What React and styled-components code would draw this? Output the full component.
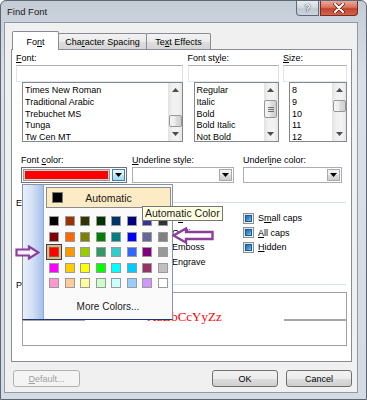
import React from 'react';
import styled, { createGlobalStyle, css } from 'styled-components';

const UI = `"Liberation Sans", Arial, sans-serif`;

const Global = createGlobalStyle`
  html, body { margin: 0; padding: 0; background: #fff; }
  body { font-family: ${UI}; }
  * { box-sizing: border-box; }
  u { text-decoration-thickness: 1px; text-underline-offset: 1px; }
`;

const Window = styled.div`
  position: relative;
  width: 367px;
  height: 400px;
  display: flex;
  flex-direction: column;
  background: linear-gradient(180deg, #c4ccd6 0%, #dce1e7 20%, #d5dbe2 100%);
  border: 1px solid #5c6675;
  border-radius: 6px 6px 0 0;
  overflow: hidden;
  font-family: ${UI};
  font-size: 9px;
  color: #000;
`;

const TitleBar = styled.div`
  height: 21px;
  flex: none;
  display: flex;
  align-items: flex-start;
`;

const Title = styled.div`
  font-size: 9.5px;
  line-height: 21px;
  padding-left: 6px;
  color: #1a1a1a;
`;

const CaptionButtons = styled.div`
  margin-left: auto;
  margin-right: 8px;
  display: flex;
  gap: 1px;
`;

const CapBtn = styled.div`
  height: 15px;
  display: flex;
  align-items: center;
  justify-content: center;
  border: 1px solid #5d6a7c;
  border-top: none;
  ${p => p.$close ? css`
    width: 38px;
    border-radius: 0 0 4px 0;
    border-color: #7a2a20;
    background: linear-gradient(180deg, #e9a99b 0%, #d9735f 45%, #c4432c 55%, #d2644c 100%);
  ` : css`
    width: 23px;
    border-radius: 0 0 0 4px;
    background: linear-gradient(180deg, #e8ecf1 0%, #d3d9e1 45%, #c1c9d3 55%, #cdd4dd 100%);
    color: #fff;
    font-weight: bold;
    font-size: 10px;
    text-shadow: 0 0 1px #2b3440, 0 0 1px #2b3440;
  `}
`;

const Client = styled.div`
  flex: 1;
  margin: 0 8px 6px 3px;
  border: 1px solid #8f9aa8;
  background: #f0f0f0;
  padding: 8px 5px 5px 6px;
  display: flex;
  flex-direction: column;
`;

const Tabs = styled.div`
  height: 19px;
  margin-bottom: -1px;
  display: flex;
  align-items: flex-start;
  padding-left: 1px;
  position: relative;
  z-index: 1;
`;

const Tab = styled.div`
  width: ${p => p.$w}px;
  display: flex;
  align-items: center;
  justify-content: center;
  border: 1px solid #898c95;
  border-bottom: none;
  border-radius: 2px 2px 0 0;
  & + & { margin-left: -1px; }
  ${p => p.$active ? css`
    height: 19px;
    padding-top: 1px;
    background: #fff;
    position: relative;
    z-index: 2;
  ` : css`
    height: 16px;
    margin-top: 2px;
    background: linear-gradient(180deg, #f3f3f3 0%, #ebebeb 50%, #dedede 51%, #d6d6d6 100%);
  `}
`;

const Panel = styled.div`
  height: 313px;
  flex: none;
  background: #fff;
  border: 1px solid #898c95;
  padding: 0 4px;
  display: flex;
  flex-direction: column;
`;

const FontGrid = styled.div`
  margin-top: 2px;
  display: grid;
  grid-template-columns: 167px 91px 64px;
  column-gap: 4.5px;
`;

const Label = styled.div`
  height: 13px;
  line-height: 13px;
  white-space: nowrap;
`;

const TextBox = styled.div`
  height: 17px;
  border: 1px solid #abadb3;
  border-color: #abadb3 #dbdfe6 #e3e9ef #e2e3ea;
  background: #fff;
`;

const ListBox = styled.div`
  height: 60px;
  margin-left: 6px;
  border: 1px solid #828790;
  background: #fff;
  display: flex;
`;

const Items = styled.div`
  flex: 1;
  padding: 1px 0 0 2px;
  overflow: hidden;
`;

const Item = styled.div`
  height: 11.8px;
  line-height: 12px;
  white-space: nowrap;
`;

const SBar = styled.div`
  width: 14px;
  display: flex;
  flex-direction: column;
  background: linear-gradient(90deg, #e2e2e2 0%, #f0f0f0 30%, #f3f3f3 70%, #e6e6e6 100%);
`;

const SArrow = styled.div`
  height: 14px;
  flex: none;
  display: flex;
  align-items: center;
  justify-content: center;
`;

const STrack = styled.div`
  flex: 1;
  display: flex;
  flex-direction: column;
  align-items: center;
`;

const SThumb = styled.div`
  width: 13px;
  margin-top: ${p => p.$top}px;
  height: ${p => p.$h}px;
  border: 1px solid #979797;
  border-radius: 2px;
  background: linear-gradient(90deg, #f4f4f4 0%, #ececec 45%, #dcdcdc 55%, #d0d0d0 100%);
  display: flex;
  align-items: center;
  justify-content: center;
`;

const Grip = styled.div`
  width: 6px;
  height: 5px;
  background: repeating-linear-gradient(180deg, #6e6e6e 0 1px, transparent 1px 2px);
`;

const ScrollBar = ({ top, h, grip }) => (
  <SBar>
    <SArrow>
      <svg width="7" height="4" viewBox="0 0 7 4"><path d="M0 4 L3.5 0 L7 4Z" fill="#4d4d4d" /></svg>
    </SArrow>
    <STrack>
      <SThumb $top={top} $h={h}>{grip && <Grip />}</SThumb>
    </STrack>
    <SArrow>
      <svg width="7" height="4" viewBox="0 0 7 4"><path d="M0 0 L3.5 4 L7 0Z" fill="#4d4d4d" /></svg>
    </SArrow>
  </SBar>
);

const ComboRow = styled.div`
  margin-top: 12px;
  margin-left: 5px;
  display: grid;
  grid-template-columns: 106px 102px 103px;
  column-gap: 5px;
  & > div:nth-child(3) { margin-left: 4px; }
`;

const Combo = styled.div`
  height: 16px;
  border: 1px solid ${p => p.$active ? '#707070' : '#abadb3'};
  background: #fff;
  display: flex;
`;

const ColorField = styled.div`
  flex: 1;
  padding: 1px;
  display: flex;
`;

const FocusBox = styled.div`
  flex: 1;
  border: 1px solid #9a9a9a;
  background: #cfcfcf;
  padding: 1px;
  display: flex;
`;

const ColorBar = styled.div`
  flex: 1;
  background: ${p => p.$c};
`;

const DropBtn = styled.div`
  width: 13px;
  margin: 1px;
  display: flex;
  align-items: center;
  justify-content: center;
  border: 1px solid ${p => p.$hover ? '#3c7fb1' : '#a9a9a9'};
  background: ${p => p.$hover
    ? 'linear-gradient(180deg, #eaf6fd 0%, #d9f0fc 50%, #bee6fd 51%, #a7d9f5 100%)'
    : 'linear-gradient(180deg, #f2f2f2 0%, #ebebeb 50%, #dddddd 51%, #cfcfcf 100%)'};
`;

const Caret = () => (
  <svg width="7" height="4" viewBox="0 0 7 4"><path d="M0 0 L7 0 L3.5 4Z" fill="#000" /></svg>
);

const SectionHead = styled.div`
  margin-top: ${p => p.$mt}px;
  height: 12px;
  display: flex;
  align-items: center;
  width: 330px;
  white-space: nowrap;
  &::after {
    content: '';
    flex: 1;
    height: 1px;
    margin-left: 5px;
    margin-top: -1px;
    background: #d5dfe5;
  }
`;

const EffectsGrid = styled.div`
  margin-top: 2px;
  margin-left: 6px;
  display: grid;
  grid-template-columns: 135px 86px 1fr;
  grid-template-rows: repeat(4, 14.5px);
  grid-auto-flow: column;
`;

const Check = styled.div`
  display: flex;
  align-items: center;
  gap: 4px;
  white-space: nowrap;
`;

const Box = styled.div`
  width: 11px;
  height: 11px;
  flex: none;
  border: 1px solid #8e8f8f;
  background: linear-gradient(135deg, #dcdcdc 0%, #fbfbfb 100%);
  display: flex;
  align-items: center;
  justify-content: center;
`;

const Fill = styled.div`
  width: 7px;
  height: 7px;
  border: 1px solid #1f5a94;
  background: linear-gradient(135deg, #2368a8 0%, #3e93d4 55%, #86caf2 100%);
`;

const PreviewBox = styled.div`
  margin-top: 1px;
  margin-left: 6px;
  width: 325px;
  height: 54px;
  border: 1px solid #a0a0a0;
  background: #fff;
  padding-top: 17px;
  display: flex;
  align-items: baseline;
  justify-content: space-between;
`;

const BaseLine = styled.div`
  width: 62px;
  height: 2px;
  background: #a6a6a6;
`;

const Sample = styled.div`
  font-family: "Liberation Serif", "Times New Roman", serif;
  font-size: 13px;
  line-height: 13px;
  color: #ff0000;
`;

const ButtonRow = styled.div`
  margin-top: 8px;
  height: 17px;
  display: flex;
  gap: 8px;
  padding-left: 2px;
`;

const Button = styled.div`
  width: ${p => p.$w}px;
  height: 17px;
  border: 1px solid ${p => p.$disabled ? '#adb2b5' : '#707070'};
  border-radius: 3px;
  display: flex;
  align-items: center;
  justify-content: center;
  color: ${p => p.$disabled ? '#a0a0a0' : '#000'};
  background: ${p => p.$disabled
    ? '#f4f4f4'
    : 'linear-gradient(180deg, #f2f2f2 0%, #ebebeb 50%, #dddddd 51%, #cfcfcf 100%)'};
  ${p => p.$push && css`margin-left: auto;`}
`;

/* ---------- colour popup (overlay) ---------- */

const Popup = styled.div`
  position: absolute;
  left: 21px;
  top: 183px;
  width: 151px;
  height: 136px;
  border: 1px solid #8a93a6;
  border-bottom-color: #1f3576;
  background: #fafafa;
  display: flex;
  z-index: 5;
`;

const Strip = styled.div`
  width: 21px;
  flex: none;
  background: linear-gradient(90deg, #e9effa 0%, #d5e1f5 45%, #a7c0ea 100%);
  border-right: 1px solid #8eaadb;
`;

const PopBody = styled.div`
  flex: 1;
  display: flex;
  flex-direction: column;
`;

const AutoBtn = styled.div`
  margin: 2px 1px 0 2px;
  height: 21px;
  border: 1px solid #8b8b8b;
  background: #fdebc6;
  display: grid;
  grid-template-columns: 1fr auto 1fr;
  align-items: center;
  font-size: 10.5px;
  color: #1a1a1a;
`;

const AutoSwatch = styled.div`
  width: 11px;
  height: 11px;
  margin-left: 5px;
  background: #000;
  border: 1px solid #7d7d7d;
`;

const Palette = styled.div`
  margin: 8px 0 0 5px;
  display: grid;
  grid-template-columns: repeat(8, 10px);
  grid-auto-rows: 10px;
  column-gap: 5.57px;
  row-gap: 5.5px;
`;

const Swatch = styled.div`
  background: ${p => p.$c};
  border: 1px solid #9b9b9b;
  ${p => p.$sel && css`
    border-color: #6a6a6a;
    box-shadow: 0 0 0 2px #fbb062, 0 0 0 3px #2d3d6e;
  `}
`;

const MoreColors = styled.div`
  margin-top: 13px;
  height: 12px;
  line-height: 12px;
  text-align: center;
  font-size: 10px;
  color: #1a1a1a;
`;

const Tooltip = styled.div`
  position: absolute;
  left: 141px;
  top: 205px;
  height: 15px;
  padding: 0 2px;
  border: 1px solid #767676;
  background: #ffffe1;
  font-size: 10.5px;
  line-height: 13px;
  color: #1a1a1a;
  white-space: nowrap;
  z-index: 6;
`;

const Arrow = styled.svg`
  position: absolute;
  left: ${p => p.$x}px;
  top: ${p => p.$y}px;
  z-index: 7;
`;

const PURPLE = '#8b3f9a';

const palette = [
  ['#000000', '#993300', '#333300', '#003300', '#003366', '#000080', '#333399', '#333333'],
  ['#800000', '#FF6600', '#808000', '#008000', '#008080', '#0000FF', '#666699', '#808080'],
  ['#FF0000', '#FF9900', '#99CC00', '#339966', '#33CCCC', '#3366FF', '#800080', '#999999'],
  ['#FF00FF', '#FFCC00', '#FFFF00', '#00FF00', '#00FFFF', '#00CCFF', '#993366', '#C0C0C0'],
  ['#FF99CC', '#FFCC99', '#FFFF99', '#CCFFCC', '#CCFFFF', '#99CCFF', '#CC99FF', '#FFFFFF'],
];

const fonts = ['Times New Roman', 'Traditional Arabic', 'Trebuchet MS', 'Tunga', 'Tw Cen MT'];
const fontStyles = ['Regular', 'Italic', 'Bold', 'Bold Italic', 'Not Bold'];
const sizes = ['8', '9', '10', '11', '12'];

const effects = [
  <>Stri<u>k</u>ethrough</>,
  <>Dou<u>b</u>le strikethrough</>,
  <>Su<u>p</u>erscript</>,
  <>Su<u>b</u>script</>,
  <>S<u>h</u>adow</>,
  <>Outline</>,
  <>Emboss</>,
  <>Engrave</>,
  <>S<u>m</u>all caps</>,
  <><u>A</u>ll caps</>,
  <><u>H</u>idden</>,
];

const ListField = ({ label, items, top, h, grip }) => (
  <div>
    <Label>{label}</Label>
    <TextBox />
    <ListBox>
      <Items>{items.map(t => <Item key={t}>{t}</Item>)}</Items>
      <ScrollBar top={top} h={h} grip={grip} />
    </ListBox>
  </div>
);

export default function App() {
  return (
    <>
      <Global />
      <Window>
        <TitleBar>
          <Title>Find Font</Title>
          <CaptionButtons>
            <CapBtn>?</CapBtn>
            <CapBtn $close>
              <svg width="12" height="10" viewBox="0 0 12 10">
                <path d="M2 1 L10 9 M10 1 L2 9" stroke="#5a1a12" strokeWidth="3.4" strokeLinecap="round" />
                <path d="M2 1 L10 9 M10 1 L2 9" stroke="#fff" strokeWidth="2" strokeLinecap="round" />
              </svg>
            </CapBtn>
          </CaptionButtons>
        </TitleBar>

        <Client>
          <Tabs>
            <Tab $active $w={47}>Fo<u>n</u>t</Tab>
            <Tab $w={89}>Cha<u>r</u>acter Spacing</Tab>
            <Tab $w={65}>Te<u>x</u>t Effects</Tab>
          </Tabs>

          <Panel>
            <FontGrid>
              <ListField label={<><u>F</u>ont:</>} items={fonts} top={18} h={12} />
              <ListField label={<>Font st<u>y</u>le:</>} items={fontStyles} top={3} h={18} grip />
              <ListField label={<><u>S</u>ize:</>} items={sizes} top={3} h={12} />
            </FontGrid>

            <ComboRow>
              <div>
                <Label>Font <u>c</u>olor:</Label>
                <Combo $active>
                  <ColorField><FocusBox><ColorBar $c="#ff0000" /></FocusBox></ColorField>
                  <DropBtn $hover><Caret /></DropBtn>
                </Combo>
              </div>
              <div>
                <Label><u>U</u>nderline style:</Label>
                <Combo>
                  <ColorField />
                  <DropBtn><Caret /></DropBtn>
                </Combo>
              </div>
              <div>
                <Label>Underl<u>i</u>ne color:</Label>
                <Combo>
                  <ColorField />
                  <DropBtn><Caret /></DropBtn>
                </Combo>
              </div>
            </ComboRow>

            <SectionHead $mt={14}>Effects</SectionHead>
            <EffectsGrid>
              {effects.map((e, i) => (
                <Check key={i}><Box><Fill /></Box><span>{e}</span></Check>
              ))}
            </EffectsGrid>

            <SectionHead $mt={10}>Preview</SectionHead>
            <PreviewBox>
              <BaseLine />
              <Sample>AaBbCcYyZz</Sample>
              <BaseLine />
            </PreviewBox>
          </Panel>

          <ButtonRow>
            <Button $disabled $w={67}><u>D</u>efault...</Button>
            <Button $push $w={66}>OK</Button>
            <Button $w={66}>Cancel</Button>
          </ButtonRow>
        </Client>

        <Popup>
          <Strip />
          <PopBody>
            <AutoBtn>
              <AutoSwatch />
              <span>Automatic</span>
              <span />
            </AutoBtn>
            <Palette>
              {palette.flat().map((c, i) => (
                <Swatch key={i} $c={c} $sel={i === 16} />
              ))}
            </Palette>
            <MoreColors>More Colors...</MoreColors>
          </PopBody>
        </Popup>

        <Tooltip>Automatic Color</Tooltip>

        <Arrow $x={14} $y={244} width="25" height="15" viewBox="0 0 25 15">
          <path d="M1.5 4.5 H14 V1.5 L23.5 7.5 L14 13.5 V10.5 H1.5 Z"
            fill="#f6f0f8" stroke={PURPLE} strokeWidth="2.2" strokeLinejoin="miter" />
        </Arrow>
        <Arrow $x={171} $y={226} width="42" height="17" viewBox="0 0 42 17">
          <path d="M1.5 8.5 L14 1.5 V5 H40.5 V12 H14 V15.5 Z"
            fill="#ffffff" stroke={PURPLE} strokeWidth="2.4" strokeLinejoin="miter" />
        </Arrow>
      </Window>
    </>
  );
}
